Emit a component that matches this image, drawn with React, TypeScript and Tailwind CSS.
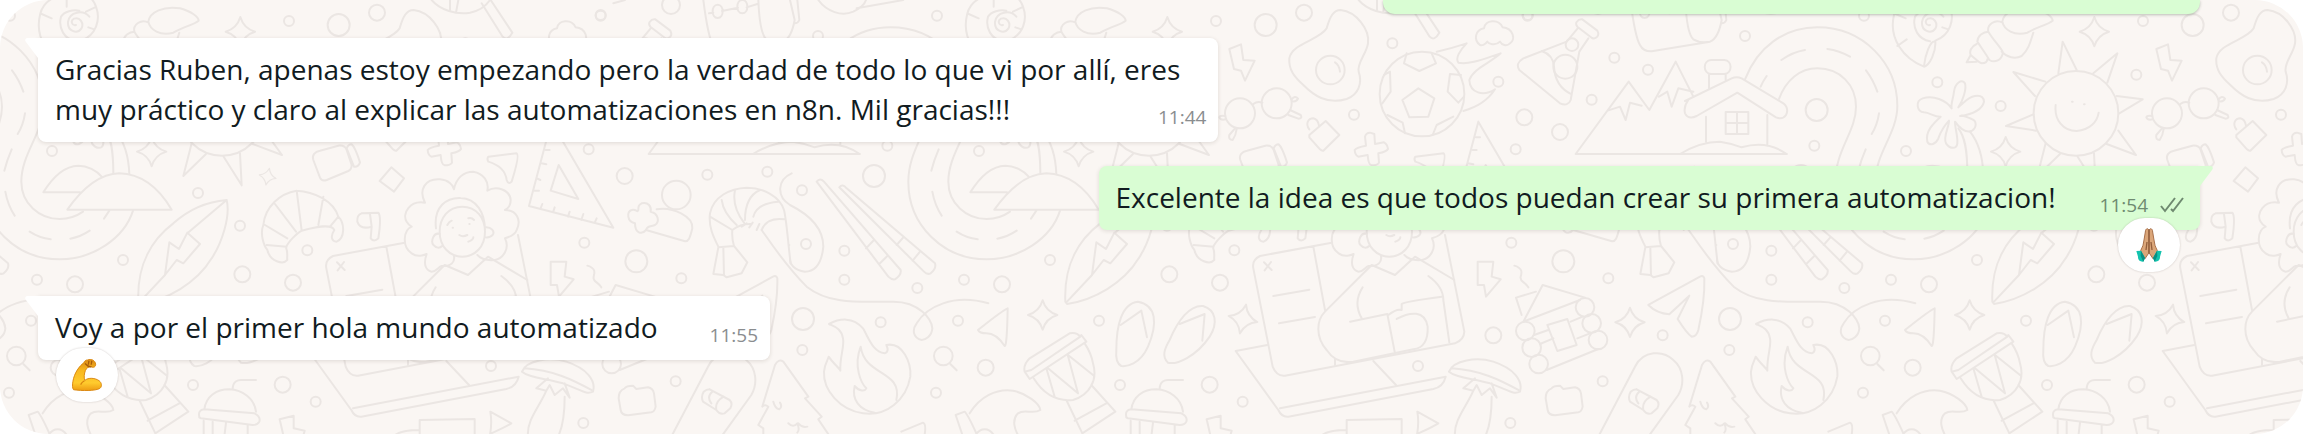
import clsx from "clsx";
import type { ReactNode } from "react";

// Every group of doodles is drawn on a grid of a third of a pixel.
const shapes = [
  {
    x: -462,
    d: [
      // road
      "M135 238C172 142 252 82 352 82C490 82 592 190 592 318C592 400 526 460 526 545C526 610 580 657 641 657C668 657 690 650 711 635",
      "M237 297C258 240 300 205 352 205C420 205 468 255 468 320C468 395 406 450 406 545C406 675 510 778 641 778C740 778 835 715 861 632",
      "M244 180Q278 156 315 150M382 147Q418 152 450 170M498 211Q520 240 532 275M537 340Q532 375 515 402M497 448Q483 480 475 512M478 575Q485 615 506 647M551 695Q580 714 614 718M673 716Q705 710 731 692M200 228Q188 245 182 260",
      // house
      "M33 180H73C98 182 98 220 73 222H33C8 220 8 182 33 180ZM27 225V265M77 225V240",
      "M-45 303L95 235Q110 228 125 235L250 310Q268 325 258 345Q248 360 228 352L112 278L-10 348Q-35 360 -45 340Q-50 320 -35 300",
      "M18 350V425M202 345V437M77 336H145V402H77ZM111 336V402M77 369H145M-60 462Q0 425 60 425Q95 430 125 442Q200 420 260 462",
      // shells
      "M690 75C678 78 672 62 684 56C702 50 715 70 706 86C692 105 664 92 666 66C670 35 712 28 730 50M582 45C565 115 610 175 672 200C690 195 708 155 706 125C690 118 675 170 672 198M706 122C750 105 765 60 750 20C745 5 740 0 735 -5M690 124C655 118 636 85 645 50C655 35 680 28 700 32M582 45C585 25 600 5 620 -5M592 138L620 118M587 42L617 55M662 0V20M720 35L747 22M727 82L745 88",
      "M907 65C912 35 952 18 1002 25C1037 35 1057 50 1058 62C1042 75 1012 80 982 98C942 108 912 90 907 65ZM908 68C885 55 860 75 865 95C880 120 900 140 908 155M1000 98C990 130 985 150 965 168C945 178 920 172 905 155M865 95C850 95 832 108 832 125C845 145 860 165 868 180C885 190 905 180 908 160M830 132C812 140 808 155 812 165C825 175 835 188 845 190C858 190 862 185 862 178M812 165L800 187L830 185",
      // palm tree
      "M755 325C738 300 700 285 668 295C645 303 650 335 672 337C690 338 705 352 722 350C700 370 675 395 682 425C690 440 708 432 715 415C722 395 735 375 747 362C748 380 728 410 738 430C750 448 770 448 772 430C774 410 765 385 765 365C775 380 795 400 815 393C832 382 830 362 815 357C800 350 785 345 780 348C800 345 845 335 852 305C850 280 820 285 800 300C790 308 780 318 775 322C790 300 800 265 795 250C785 235 765 250 762 275C760 295 752 310 755 325",
      "M775 385C795 410 802 450 802 520M810 395C838 430 848 470 850 522",
      // sun
      "M1075 220L1088 125L1130 210M1180 220L1252 160L1222 248M1250 288L1328 298L1258 340M1255 392L1308 465L1220 432M1036 245L940 216L1005 288M1000 343L918 378L1008 392M1037 430L1012 528L1080 462M1133 470L1187 556L1182 460M1067 315C1062 360 1090 393 1130 393C1170 390 1192 365 1196 338M1116 305H1118M1152 313H1154",
      // campfire
      "M168 972C200 955 240 950 270 985C290 1020 300 1055 335 1060C350 1055 342 1040 340 1035C390 1025 415 1090 412 1130C400 1200 340 1250 270 1240C200 1230 150 1170 153 1115C155 1090 165 1080 167 1070C180 1090 200 1105 202 1112C200 1070 215 1040 210 1015C205 985 185 980 168 972ZM305 1238C260 1230 235 1200 245 1158C260 1175 275 1175 280 1165C265 1150 240 1100 263 1040C275 1130 390 1110 370 1200",
      "M532 1092L551 1111M704 925Q690 930 615 990Q620 1000 640 1000Q670 1000 695 1038Q702 1040 704 925Z",
      // drum
      "M770 1075L890 1000Q910 995 922 1010L775 1110L755 1115Q750 1095 770 1075ZM755 1115L770 1137L940 1025L925 1005M782 1135C810 1180 850 1205 900 1200C950 1185 975 1140 960 1090C955 1060 945 1045 935 1030M820 1105L845 1190M825 1105L915 1180L885 1068M885 1065L960 1125M880 1200L928 1300L1027 1235L955 1155M905 1262L1000 1210",
      "M548 1245L575 1235Q585 1245 610 1300M548 1245L570 1310M590 1240C620 1190 670 1165 720 1172C760 1180 800 1210 802 1230C780 1245 755 1225 735 1240C715 1260 725 1290 738 1310M605 1310C620 1280 650 1280 665 1310M385 1295L450 1268Q460 1270 455 1305",
      // cupcake
      "M1075 1228C1080 1190 1110 1168 1150 1168C1190 1170 1225 1195 1230 1235M1060 1250Q1055 1230 1075 1228L1225 1240Q1245 1250 1240 1265Q1235 1275 1220 1275L1065 1255Q1058 1253 1060 1250M1160 1168C1160 1145 1175 1138 1190 1140H1230M1073 1262V1310M1100 1265V1310M1140 1268L1135 1310M1205 1275V1310",
      // flip-flops
      "M1030 1050C1030 980 1045 910 1095 905C1150 915 1155 970 1125 1040C1100 1095 1060 1100 1045 1098C1030 1090 1028 1070 1030 1050ZM1043 975L1105 932L1122 1012M1190 1020C1215 960 1250 915 1290 918C1330 930 1335 970 1310 1010C1270 1070 1210 1095 1185 1088C1165 1070 1175 1045 1190 1020ZM1220 972L1295 942L1288 1022",
    ],
    circles: [
      [135, 108, 15], [492, 47, 15], [712, 247, 15], [902, 318, 15], [343, 437, 15],
      [618, 453, 15], [214, 752, 15], [214, 839, 15], [433, 864, 15], [573, 839, 15],
      [831, 780, 15], [323, 967, 15], [88, 1050, 15], [555, 962, 15], [978, 962, 15],
      [489, 1178, 15], [1041, 1155, 15], [350, 330, 33], [687, 853, 24], [1189, 823, 24],
      [90, 957, 33], [638, 1103, 24], [1128, 340, 127], [511, 1068, 28],
    ],
    sparkles: [[1183, 95, 0, 1], [917, 455, 0, 1], [809, 945, 0, 1]],
  },
  {
    x: 0,
    d: [
      // islands
      "M240 577H130C165 520 200 498 235 497C262 497 290 512 305 530M202 629H515C480 570 430 522 358 520C290 522 240 575 202 629ZM328 632L312 656",
      // tennis racket
      "M1295 0C1320 30 1370 45 1410 38C1440 32 1460 15 1470 0M1350 0V30M1375 0L1368 38M1445 10L1508 110Q1522 125 1537 98L1472 0",
      // mug
      "M940 480C935 465 945 455 960 452L1015 437Q1035 435 1040 450L1055 495Q1055 508 1045 513L980 540Q965 545 960 533ZM1040 445Q1045 433 1055 433Q1065 440 1080 487Q1075 502 1062 500Z",
      "M1174 502L1212 535L1182 575L1139 543ZM1465 470L1550 460Q1560 465 1535 545Q1525 555 1520 540Q1515 500 1465 485Q1460 477 1465 470Z",
      // girl
      "M1275 608C1255 570 1275 535 1320 538C1345 540 1360 555 1362 568C1368 535 1390 515 1420 515C1450 520 1468 545 1462 572C1490 555 1530 570 1532 600C1532 615 1525 625 1515 630C1550 630 1565 660 1550 690C1545 705 1525 712 1515 715C1530 745 1510 775 1485 780C1460 782 1440 775 1432 765M1275 608C1230 600 1205 640 1220 665C1226 675 1235 680 1235 680C1210 690 1205 740 1235 760C1255 775 1280 762 1280 762C1270 790 1275 810 1295 815C1310 815 1315 800 1325 798C1355 800 1365 785 1362 768",
      "M1387 620C1430 620 1455 655 1455 695C1455 740 1425 770 1387 770C1349 770 1319 740 1319 695C1319 655 1344 620 1387 620ZM1308 685C1300 620 1340 592 1382 594C1430 595 1455 640 1455 690M1320 702C1300 695 1292 725 1300 735C1308 745 1320 745 1326 738M1455 682C1475 680 1485 695 1478 705C1470 715 1458 712 1455 712M1342 675Q1347 665 1355 662M1405 655Q1415 652 1422 660M1358 683H1359M1408 672H1409M1378 705Q1388 712 1402 705M1405 725Q1420 720 1420 712",
      "M1085 640L1135 638Q1145 650 1135 715Q1122 728 1112 715L1115 680Q1080 690 1072 665Q1070 645 1085 640M1110 642L1115 680",
      // croissant
      "M890 572C940 575 1000 600 1015 650C1035 670 1035 715 1010 725C995 725 990 710 1003 690C995 670 950 680 905 692C890 700 865 725 858 742C865 760 860 770 862 780C850 795 810 785 802 750C790 735 780 700 790 675C795 620 840 580 890 572ZM890 572L905 692M825 612L888 695M795 675L862 715M800 735L860 740M970 590L955 675M1015 650L990 680",
      // surfboard
      "M415 905C410 790 460 715 520 670C570 625 620 605 680 600C692 650 665 730 635 775C590 850 500 900 420 912ZM680 600L562 700M420 905L495 825M495 825L508 727L537 747L562 698L600 732L550 790L530 780L495 825",
    ],
    circles: [[594, 579, 15], [720, 677, 15]],
    sparkles: [[803, 530, 12, 0.58]],
  },
  {
    x: 759,
    d: [
      "M148 147L183 133L190 180L224 182L195 242L183 212L162 207Z",
      // fried egg
      "M440 85C450 50 460 30 482 30C530 35 570 90 564 130C560 160 530 190 536 215C548 250 535 285 500 297C440 315 400 285 370 255C345 232 325 210 328 175C335 130 420 120 440 85ZM465 187Q478 195 480 215",
      // glasses
      "M220 312Q232 302 247 308M335 298Q345 285 354 296Q350 306 337 304M330 330L362 345Q368 356 355 356L325 345M165 385L148 405Q145 420 158 420Q168 405 170 387M136 348Q120 345 118 352Q122 362 137 358",
      "M388 405L437 363L478 405L430 452Q425 453 420 448L388 412ZM388 388C375 370 385 355 400 355C410 357 415 365 417 377",
      "M555 410Q558 398 570 398L583 402L585 432L612 427Q622 432 624 447Q620 455 595 460L597 488Q592 496 575 496Q565 495 563 465L535 470Q525 465 524 450Q530 442 558 437Z",
      // football
      "M715 265L763 295L745 350L688 352L667 300ZM680 160L672 190L718 213L768 190L755 160M612 225L630 215L632 275L607 310M843 225L810 222L803 275L835 308L852 290M622 345L668 368L675 400M820 350L770 375L758 405M770 155Q815 145 860 130C840 150 825 175 835 188C870 195 915 175 962 160C930 190 880 205 868 240C870 280 910 290 945 268Q915 315 850 333",
      "M900 135C880 120 885 90 912 85C915 60 955 55 968 82C1000 85 1008 120 990 130C980 140 965 135 960 125C945 140 925 130 922 125C915 135 905 137 900 135Z",
      // flask
      "M1207 58L1252 92Q1258 102 1252 110Q1245 118 1236 114L1192 80Q1186 72 1190 66Q1197 56 1207 58ZM1193 85L1160 125L1030 175Q1005 190 1018 210L1140 310Q1165 320 1172 300L1198 155L1225 115M1085 153Q1120 165 1122 200Q1125 260 1175 283",
      // backpack
      "M1351 0Q1365 110 1380 135Q1390 155 1415 154L1590 125Q1615 115 1625 60L1611 0M1516 0Q1520 100 1540 118Q1560 130 1590 125M1633 0L1639 60Q1635 70 1625 70M1368 40L1381 38M1407 33L1455 23M1481 22L1513 12M1394 14C1414 14 1414 54 1394 54C1374 54 1374 14 1394 14ZM1468 0C1488 0 1488 40 1468 40C1448 40 1448 0 1468 0Z",
      // mountains
      "M1820 462H1187L1346 245L1408 330L1487 185L1540 290M1283 332L1320 320L1337 360L1350 308L1385 317M1437 290L1462 275L1475 320L1495 265L1540 275",
      // set square
      "M895 365L828 618L1081 683ZM917 495L976 597L893 572ZM888 412H900M878 450H890M950 635L945 650M991 642L985 660M1031 655L1025 668M905 622L900 637M868 612L862 627M865 490L880 493M852 535L862 540M845 572H858",
      // laptop
      "M455 728L240 768Q215 780 220 805L278 1100Q290 1130 315 1127L825 1030Q852 1020 853 995L795 705M400 740L435 930M252 787L275 810M273 786L254 811M280 888L388 869M297 970L405 951",
      "M575 795L645 825L705 770L823 840M575 795L435 935C410 960 405 1010 440 1050C460 1080 490 1090 520 1085M745 828Q790 860 790 900L808 1027M548 862C530 890 525 920 545 955M510 965L622 942L645 1060M625 945Q650 925 665 930V912Q670 905 785 890M650 957C690 935 735 930 743 980C745 1030 725 1045 700 1048L520 1085M465 1078V1095",
      "M262 1035L167 1053L295 1230Q305 1252 325 1250L760 1167Q790 1160 797 1130L300 1225M580 1083L648 1155",
      "M893 785H940L935 830L962 838L918 890L912 855H893ZM1003 797C1030 805 1025 820 1022 830C1018 845 1035 845 1045 862",
      // log cabin
      "M1030 965L1088 855L1215 893M1025 945L1008 893L1068 875M1030 965L1200 900M1102 975L1162 957L1190 1035L1132 1053ZM1062 1005L1105 990M1080 1032L1120 1015M1172 965L1208 950M1192 1015L1230 1000M1100 1110L1255 1047",
      // paper plane
      "M1560 830L1405 915Q1430 940 1468 943L1528 887L1493 957Q1520 1000 1535 1010Q1550 1010 1555 990Q1575 900 1573 835Q1570 825 1560 830Z",
      // mushroom
      "M807 1115C820 1080 890 1070 940 1085C1000 1105 1030 1140 1020 1175C1000 1185 985 1170 930 1150C880 1135 830 1135 807 1115ZM815 1105C900 1110 960 1140 1015 1170M885 1135L850 1165L880 1172L890 1155L905 1185L930 1165L950 1193L935 1150M880 1172C860 1220 820 1260 825 1310M935 1190C935 1240 930 1280 915 1310",
      "M1115 1165Q1120 1157 1140 1157L1150 1167L1185 1162Q1200 1165 1203 1180L1208 1220Q1205 1235 1195 1237L1125 1246Q1105 1245 1103 1230L1097 1195Q1097 1172 1115 1165Z",
      // snowboard
      "M1255 1310L1365 1100C1390 1050 1450 1050 1480 1080C1510 1105 1515 1150 1495 1185L1405 1310M1370 1168L1430 1200Q1440 1210 1432 1225L1415 1240Q1400 1245 1390 1230L1350 1205Q1343 1190 1352 1175Q1360 1168 1370 1168M1378 1175Q1360 1190 1375 1210M1412 1190Q1385 1205 1390 1230",
      "M80 1258L122 1247V1285L155 1292L150 1310M80 1258L92 1310M500 1310V1260L665 1257V1310M420 1310Q440 1290 498 1290M710 1310Q718 1270 712 1235L775 1270Q760 1280 715 1300",
    ],
    circles: [
      [108, 63, 15], [88, 224, 15], [637, 130, 15], [522, 344, 15], [1043, 45, 15],
      [1303, 173, 15], [1404, 209, 15], [1235, 299, 15], [1007, 448, 15], [955, 245, 15],
      [994, 728, 15], [1285, 835, 15], [163, 751, 15], [1448, 1006, 15], [1268, 1144, 15],
      [714, 1098, 15], [188, 1205, 15], [991, 1269, 15], [257, 75, 33], [372, 38, 24],
      [1033, 352, 24], [1140, 396, 24], [1150, 784, 33], [120, 848, 24], [940, 1006, 24],
      [89, 1154, 24], [451, 210, 43], [180, 340, 45], [290, 310, 45], [726, 282, 127],
      [1176, 134, 19], [1156, 200, 36], [1215, 922, 28], [1235, 970, 28], [1254, 1020, 28],
      [1036, 993, 28], [1055, 1043, 28], [1076, 1092, 28],
    ],
    sparkles: [[189, 957, 12, 1], [1350, 967, 0, 1]],
  },
  {
    x: 1680,
    d: [
      "M775 0C800 35 845 50 880 35C900 25 915 10 918 0M890 25L1030 0M160 10L195 0",
      // chopsticks
      "M770 545Q780 532 792 545L1022 810Q1025 825 1005 838Q995 840 985 830ZM918 745L942 720M960 790L982 768M838 562Q848 550 860 565L1125 790Q1130 805 1112 820Q1102 825 1092 815ZM1010 735L1030 712M1058 782L1080 755",
      // prawn
      "M695 520C650 540 650 590 690 615C740 640 790 680 790 740C785 790 765 815 735 815C700 810 690 790 690 780M605 690C640 740 680 800 740 860C810 915 900 905 1000 905C1080 905 1115 960 1117 985C1115 1010 1095 1020 1085 1020C1060 1015 1055 990 1070 970C1100 920 1180 880 1285 910",
      "M475 740C460 710 445 680 450 640C460 590 510 565 560 563C610 563 660 590 672 630C680 660 685 740 692 790M517 690C530 680 550 670 575 672M517 690Q515 715 522 738L475 742L460 822L490 825L500 832L545 820L562 787L522 738M490 742L492 825M450 650L517 690M485 600Q490 640 530 675M525 570Q515 620 552 668M600 570Q555 590 555 660M655 605Q590 610 580 650M675 658Q620 650 605 690M545 680L560 670M568 682L578 668M590 690L598 672M687 735H688",
      "M290 628C340 620 400 650 397 685C390 715 385 725 375 724L258 690M245 610C265 605 275 620 272 635C295 640 300 665 285 675C275 680 262 675 258 690C245 705 225 700 225 670C200 665 200 635 215 630C228 625 232 640 235 630C235 620 235 615 245 610Z",
      // fir tree
      "M607 1220L645 1095Q655 1075 670 1085L745 1190L735 1195L785 1250L775 1258L810 1310M607 1220Q615 1212 625 1220L595 1275L610 1285V1310M640 1205Q645 1225 658 1228Q668 1220 660 1208M685 1270Q700 1285 712 1270Q720 1290 712 1298M715 1270Q728 1285 742 1280",
    ],
    circles: [
      [122, 47, 15], [442, 524, 15], [622, 515, 15], [726, 571, 15], [738, 732, 15],
      [333, 15, 27], [194, 528, 24], [349, 585, 43], [942, 528, 33],
    ],
    sparkles: [],
  },
];

function Wallpaper() {
  return (
    <svg
      aria-hidden="true"
      className="absolute inset-0 h-full w-full"
      fill="none"
      stroke="#ebe6e3"
      strokeWidth="6"
      strokeLinecap="round"
      strokeLinejoin="round"
    >
      <defs>
        <g id="doodles" transform="scale(0.33333)">
          {shapes.map((group) => (
            <g key={group.x} transform={`translate(${group.x} 0)`}>
              {group.d.map((d) => (
                <path key={d} d={d} />
              ))}
              {group.circles.map(([cx, cy, r]) => (
                <circle key={`${cx}-${cy}`} cx={cx} cy={cy} r={r} />
              ))}
              {group.sparkles.map(([x, y, angle, size]) => (
                <path
                  key={`${x}-${y}`}
                  transform={`translate(${x} ${y}) rotate(${angle}) scale(${size})`}
                  d="M0-44Q10-10 44 0Q10 10 0 44Q-10 10-44 0Q-10-10 0-44Z"
                />
              ))}
            </g>
          ))}
        </g>
      </defs>
      {[-927, 0, 927, 1854, 2781].map((x) => (
        <use key={x} href="#doodles" x={x} />
      ))}
    </svg>
  );
}

function Muscle() {
  return (
    <svg viewBox="0 0 92 100" className="h-8 w-8">
      <defs>
        <linearGradient id="skin" x1="0" y1="0" x2="0" y2="1">
          <stop offset="0" stopColor="#d98a16" />
          <stop offset="0.35" stopColor="#f8b820" />
          <stop offset="0.75" stopColor="#ffcb2e" />
          <stop offset="1" stopColor="#ee9c12" />
        </linearGradient>
      </defs>
      <path
        d="M48 3C58-2 72 4 73 16C74 24 66 29 59 24C51 24 44 28 41 36C37 46 36 58 39 67C50 57 72 59 84 68C92 74 94 86 86 92C72 100 30 100 4 96C0 92 0 80 2 70C6 44 22 22 36 12C38 6 42 3 48 3Z"
        fill="url(#skin)"
        stroke="#d9860f"
        strokeWidth="3"
      />
      <path d="M52 6L50 18M61 6L59 18M40 14Q50 26 60 24" fill="none" stroke="#a85c0a" strokeWidth="4" />
      <path d="M38 68Q30 72 26 80" fill="none" stroke="#d9860f" strokeWidth="4" />
    </svg>
  );
}

function FoldedHands() {
  return (
    <svg viewBox="0 0 78 102" className="h-[34px] w-[34px]">
      <path d="M38 5C34-1 28 3 28 12L24 36L21 52C18 60 14 66 13 72L27 92L39 74Z" fill="#dba679" stroke="#a8704a" strokeWidth="3" />
      <path d="M40 5C44-1 50 3 50 12L54 36L57 52C60 60 64 66 65 72L51 92L39 74Z" fill="#dba679" stroke="#a8704a" strokeWidth="3" />
      <path d="M39 4V76M33 42L30 66M45 42L48 66" fill="none" stroke="#94603d" strokeWidth="4" />
      <path d="M1 69L15 68L27 90L22 101C12 102 5 96 6 86Z" fill="#13c3ae" />
      <path d="M77 69L63 68L51 90L56 101C66 102 73 96 72 86Z" fill="#13c3ae" />
      <path d="M15 68L27 90L22 101L14 84ZM63 68L51 90L56 101L64 84Z" fill="#0b8f83" />
    </svg>
  );
}

type MessageProps = {
  text: string;
  time: string;
  sent?: boolean;
  wide?: boolean;
  reaction?: { label: string; icon: ReactNode };
};

function Message({ text, time, sent, wide, reaction }: MessageProps) {
  return (
    <li className={clsx("flex flex-col", sent ? "items-end" : "items-start")}>
      <div
        className={clsx(
          "relative rounded-lg pt-[11px] pb-[13px] pl-[17px] shadow-[0_1px_4px_rgba(60,40,30,0.14)]",
          sent ? "rounded-tr-none bg-[#d9fdd3] pr-4" : "rounded-tl-none bg-white pr-3",
          wide && "w-[54.6%]",
        )}
      >
        <svg
          aria-hidden="true"
          viewBox="0 0 13 20"
          className={clsx("absolute top-0 h-5 w-[13px]", sent ? "-right-[13px] -scale-x-100" : "-left-[13px]")}
        >
          <path d="M13 0H2Q-1 1 1 4L13 20Z" fill={sent ? "#d9fdd3" : "#ffffff"} />
        </svg>
        <p className="text-[28px] leading-10 text-[#111b21]">
          {text}
          <span
            className={clsx(
              "float-right mt-4 flex items-center gap-3 text-[19px] leading-6",
              sent ? "ml-11 text-[#6f8a70]" : "ml-13 text-[#8a8d8f]",
            )}
          >
            <time>{time}</time>
            {sent && (
              <svg aria-label="Entregado" viewBox="0 0 24 16" className="h-4 w-6" fill="none" stroke="currentColor" strokeWidth="2">
                <path d="M1 9L5 14L15 1M11 12L13 14L23 1" />
              </svg>
            )}
          </span>
        </p>
      </div>
      {reaction && (
        <button
          aria-label={reaction.label}
          className={clsx(
            "relative -mt-3 flex h-[54px] w-[62px] items-center justify-center rounded-full bg-white shadow-[0_0_2px_rgba(60,40,30,0.25)]",
            sent ? "mr-5" : "ml-4.5",
          )}
        >
          {reaction.icon}
        </button>
      )}
    </li>
  );
}

export default function App() {
  return (
    <div className="bg-white font-['Open_Sans','Noto_Sans',sans-serif]">
      <main className="relative overflow-hidden rounded-[48px] bg-[#faf6f3] pr-[103px] pb-8 pl-[38px]">
        <Wallpaper />
        <ul className="relative flex flex-col gap-6">
          <li className="flex justify-end">
            <div className="h-[14px] w-[37.8%] rounded-b-xl bg-[#d9fdd3] shadow-[0_1px_3px_rgba(40,60,40,0.3)]" />
          </li>
          <Message
            wide
            text="Gracias Ruben, apenas estoy empezando pero la verdad de todo lo que vi por allí, eres muy práctico y claro al explicar las automatizaciones en n8n. Mil gracias!!!"
            time="11:44"
          />
          <Message
            sent
            text="Excelente la idea es que todos puedan crear su primera automatizacion!"
            time="11:54"
            reaction={{ label: "Reacción: manos juntas", icon: <FoldedHands /> }}
          />
          <Message
            text="Voy a por el primer hola mundo automatizado"
            time="11:55"
            reaction={{ label: "Reacción: bíceps", icon: <Muscle /> }}
          />
        </ul>
      </main>
    </div>
  );
}
